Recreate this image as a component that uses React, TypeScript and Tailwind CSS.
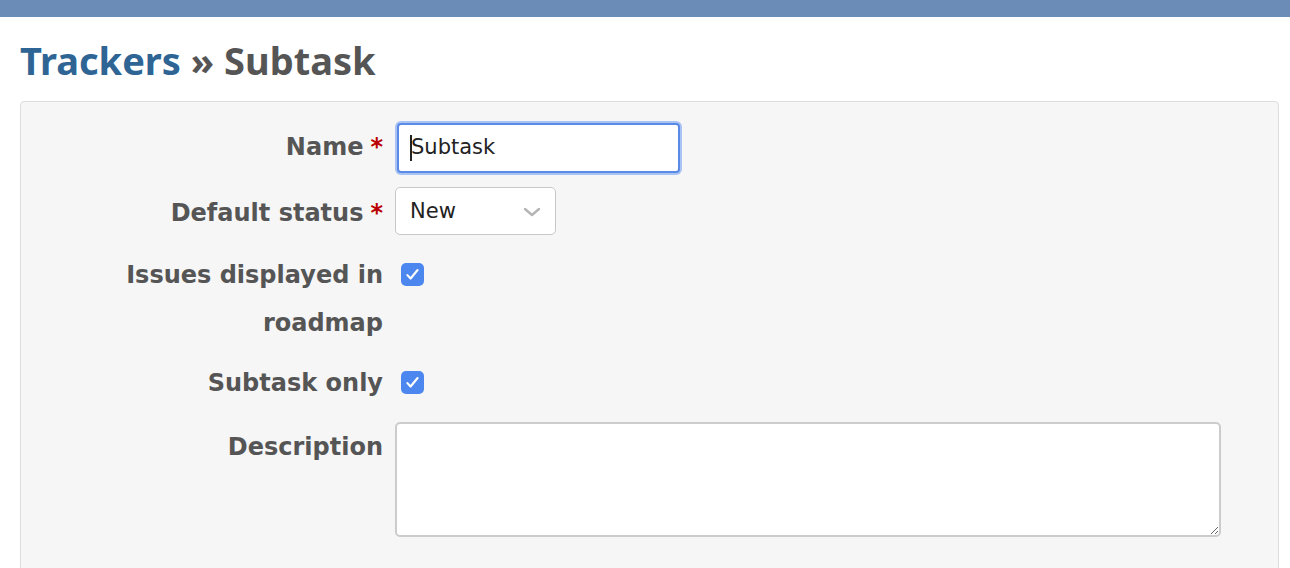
import React from "react";

const labelCls =
  "w-[374px] shrink-0 pr-[12px] pt-[2px] text-right text-[24px] font-bold leading-[48px] text-[#555]";

function Req() {
  return <span className="ml-[7px] text-[#bb0000]">*</span>;
}

function Check() {
  return (
    <div className="flex h-[23px] w-[23px] items-center justify-center rounded-[5px] bg-[#4c87ef]">
      <svg width="17" height="17" viewBox="0 0 16 16" fill="none">
        <path d="M3.2 8.6l3 3.2L12.8 3.8" stroke="#fff" strokeWidth="2" strokeLinecap="round" strokeLinejoin="round" />
      </svg>
    </div>
  );
}

export default function App() {
  return (
    <div className="min-h-[568px] bg-white" style={{ fontFamily: '"DejaVu Sans", Verdana, sans-serif' }}>
      <div className="h-[17px] bg-[#6a8cb6]" />
      <div className="pl-[20px] pr-[11px]">
        <h2
          className="pt-[19px] pb-[17px] text-[38px] font-bold leading-[48px] text-[#555]"
          style={{ fontFamily: '"Noto Sans", "Open Sans", sans-serif' }}
        >
          <span className="text-[#2e6594]">Trackers</span> » Subtask
        </h2>
        <div className="rounded-[4px] border border-[#dddddd] bg-[#f6f6f6] pt-[19px] pb-[40px] pr-[57px]">
          <div className="flex items-start">
            <label className={labelCls}>
              Name
              <Req />
            </label>
            <div className="rounded-[6px] bg-[#a9c3f5] p-[2px]">
              <div className="flex h-[50px] w-[283px] items-center rounded-[4px] border-2 border-[#5b8ae6] bg-white pl-[11px] text-[21px] text-[#222]">
                <span className="mr-[-1px] h-[26px] w-[2px] bg-[#222]" />
                Subtask
              </div>
            </div>
          </div>
          <div className="mt-[12px] flex items-start">
            <label className={labelCls}>
              Default status
              <Req />
            </label>
            <div className="flex h-[48px] w-[161px] items-center justify-between rounded-[5px] border border-[#c8c8c8] bg-white pl-[14px] pr-[14px] pt-[2px] text-[21px] text-[#222]">
              New
              <svg width="18" height="12" viewBox="0 0 18 12" fill="none">
                <path d="M2 3l7 6 7-6" stroke="#b5b5b5" strokeWidth="2.4" strokeLinecap="round" strokeLinejoin="round" />
              </svg>
            </div>
          </div>
          <div className="mt-[12px] flex items-start">
            <label className={labelCls}>
              Issues displayed in
              <br />
              roadmap
            </label>
            <div className="ml-[6px] mt-[14px]">
              <Check />
            </div>
          </div>
          <div className="mt-[10px] flex items-start">
            <label className={labelCls}>Subtask only</label>
            <div className="ml-[6px] mt-[14px]">
              <Check />
            </div>
          </div>
          <div className="mt-[14px] flex items-start">
            <label className={labelCls}>Description</label>
            <textarea
              className="mt-[1px] h-[115px] flex-1 rounded-[5px] border-2 border-[#cccccc] bg-white outline-none"
              defaultValue=""
            />
          </div>
        </div>
      </div>
    </div>
  );
}
